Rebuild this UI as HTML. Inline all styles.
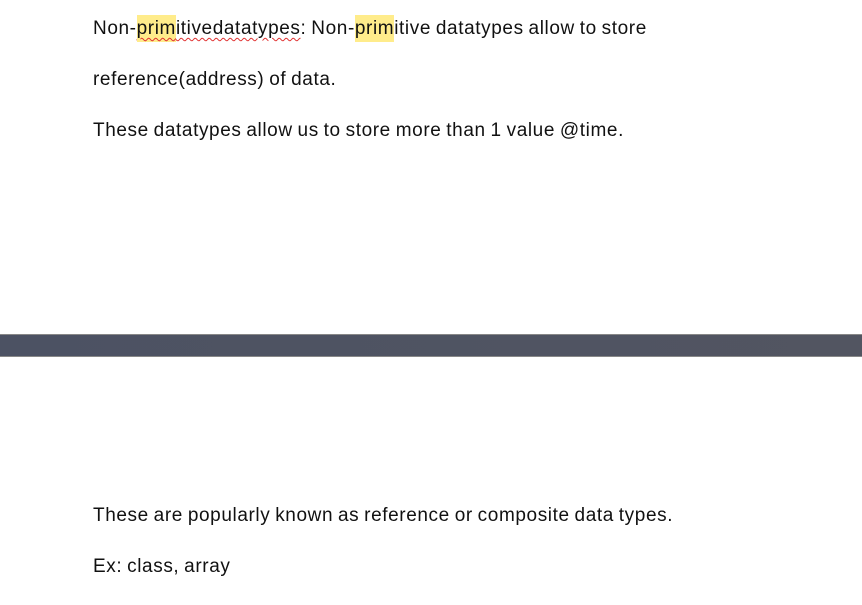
<!DOCTYPE html>
<html><head><style>
body{margin:0;width:862px;height:605px;background:#fff;position:relative;overflow:hidden;font-family:"Liberation Sans",sans-serif;font-size:19px;color:#111}
.l{position:absolute;left:93px;white-space:nowrap;line-height:26px;letter-spacing:0.6px;word-spacing:-1px}
.h{background:#ffec8b;padding:3px 0}
.w{text-decoration:underline wavy #e03030;text-decoration-thickness:1px;text-underline-offset:3px}
.bar{position:absolute;left:0;top:334px;width:862px;height:23px;background:linear-gradient(90deg,#4c5263,#525561);border-top:1px solid #888;border-bottom:1px solid #888;box-sizing:border-box}
</style></head><body>
<div class="l" style="top:16px">Non-<span class="w"><span class="h">prim</span>itivedatatypes</span>: Non-<span class="h">prim</span>itive datatypes allow to store</div>
<div class="l" style="top:67px">reference(address) of data.</div>
<div class="l" style="top:118px">These datatypes allow us to store more than 1 value @time.</div>
<div class="bar"></div>
<div class="l" style="top:503px">These are popularly known as reference or composite data types.</div>
<div class="l" style="top:554px">Ex: class, array</div>
</body></html>
